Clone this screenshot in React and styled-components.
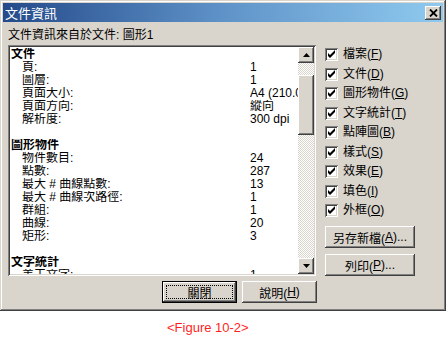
import styled, { createGlobalStyle } from "styled-components";

const FACE = "#d9d4cc";

const GlobalStyle = createGlobalStyle`
  body {
    margin: 0;
    background: #fff;
    font-family: "Liberation Sans", "Noto Sans CJK TC", sans-serif;
    font-size: 12px;
    color: #000;
  }
`;

const raised = `
  box-shadow: inset -1px -1px #404040, inset 1px 1px #fff,
    inset -2px -2px #808080, inset 2px 2px ${FACE};
`;

const sunken = `
  box-shadow: inset 1px 1px #808080, inset -1px -1px #fff,
    inset 2px 2px #404040, inset -2px -2px ${FACE};
`;

const Window = styled.div`
  width: 446px;
  height: 311px;
  box-sizing: border-box;
  padding: 3px 3px 0 3px;
  background: ${FACE};
  box-shadow: inset -1px -1px #404040, inset 1px 1px ${FACE},
    inset -2px -2px #808080, inset 2px 2px #fff;
  display: flex;
  flex-direction: column;
`;

const TitleBar = styled.div`
  height: 19px;
  display: flex;
  align-items: center;
  justify-content: space-between;
  padding: 0 2px;
  background: linear-gradient(to right, #244a8a, #5f93c8 50%, #8fcaef);
  color: #fff;
  font-family: "Noto Sans CJK TC", sans-serif;
  font-size: 13px;
  line-height: 19px;
`;

const CloseButton = styled.div`
  width: 16px;
  height: 14px;
  display: flex;
  align-items: center;
  justify-content: center;
  background: ${FACE};
  ${raised}
`;

const Body = styled.div`
  padding: 6px 0 0 5px;
  display: flex;
  flex-direction: column;
`;

const SourceLabel = styled.div`
  height: 14px;
  line-height: 14px;
  margin-bottom: 3px;
`;

const Main = styled.div`
  display: flex;
  gap: 9px;
`;

const ListBox = styled.div`
  width: 308px;
  height: 231px;
  box-sizing: border-box;
  padding: 2px;
  background: #fff;
  display: flex;
  ${sunken}
`;

const ListContent = styled.div`
  flex: 1;
  overflow: hidden;
  padding-top: 1px;
`;

const Row = styled.div`
  display: grid;
  grid-template-columns: 240px 1fr;
  height: 13px;
  line-height: 13px;
  white-space: nowrap;
  overflow: hidden;
  padding-left: ${(p) => (p.$heading ? 1 : 0)}px;
  font-weight: ${(p) => (p.$heading ? 700 : 400)};
`;

const RowLabel = styled.span`
  padding-left: ${(p) => (p.$heading ? 0 : 12)}px;
`;

const RowValue = styled.span`
  overflow: hidden;
`;

const ScrollBar = styled.div`
  width: 16px;
  display: flex;
  flex-direction: column;
`;

const ArrowButton = styled.div`
  width: 16px;
  height: 16px;
  display: flex;
  align-items: center;
  justify-content: center;
  background: ${FACE};
  ${raised}
`;

const Track = styled.div`
  flex: 1;
  background-color: #fff;
  background-image: conic-gradient(${FACE} 25%, #fff 0 50%, ${FACE} 0 75%, #fff 0);
  background-size: 2px 2px;
`;

const Thumb = styled.div`
  margin-top: 12px;
  height: 60px;
  background: ${FACE};
  ${raised}
`;

const SidePanel = styled.div`
  display: flex;
  flex-direction: column;
  padding-top: 3px;
`;

const CheckRow = styled.div`
  height: 19.5px;
  display: flex;
  align-items: flex-start;
  gap: 5px;
  line-height: 13px;
`;

const Box = styled.div`
  width: 13px;
  height: 13px;
  background: #fff;
  ${sunken}
`;

const Key = styled.span`
  text-decoration: underline;
`;

const SideButton = styled.div`
  width: 90px;
  height: 22px;
  margin-top: ${(p) => p.$top}px;
  display: flex;
  align-items: center;
  justify-content: center;
  background: ${FACE};
  ${raised}
`;

const Footer = styled.div`
  width: 309px;
  margin-top: 5px;
  display: flex;
  justify-content: flex-end;
  gap: 5px;
`;

const Button = styled.div`
  width: 75px;
  height: 22px;
  box-sizing: border-box;
  display: flex;
  align-items: center;
  justify-content: center;
  background: ${FACE};
  ${raised}
  border: ${(p) => (p.$default ? "1px solid #000" : "none")};
  outline: ${(p) => (p.$default ? "1px dotted #000" : "none")};
  outline-offset: -5px;
`;

const Caption = styled.div`
  padding: 9px 0 0 167px;
  font-family: "Liberation Sans", Arial, sans-serif;
  font-size: 13px;
  line-height: 16px;
  color: #ff1f1f;
`;

const CloseIcon = () => (
  <svg width="9" height="8" viewBox="0 0 9 8">
    <path d="M1 0.5 L8 7.5 M8 0.5 L1 7.5" stroke="#000" strokeWidth="1.8" />
  </svg>
);

const Arrow = ({ down }) => (
  <svg width="7" height="4" viewBox="0 0 7 4">
    <path d={down ? "M0 0 H7 L3.5 4Z" : "M0 4 H7 L3.5 0Z"} fill="#000" />
  </svg>
);

const Check = () => (
  <Box>
    <svg width="13" height="13" viewBox="0 0 13 13">
      <polygon points="3,5 3,8 5,10 10,5 10,2 5,7" fill="#000" />
    </svg>
  </Box>
);

const rows = [
  { label: "文件", heading: true },
  { label: "頁:", value: "1" },
  { label: "圖層:", value: "1" },
  { label: "頁面大小:", value: "A4 (210.0 x 297.0 mm)" },
  { label: "頁面方向:", value: "縱向" },
  { label: "解析度:", value: "300 dpi" },
  { label: "" },
  { label: "圖形物件", heading: true },
  { label: "物件數目:", value: "24" },
  { label: "點數:", value: "287" },
  { label: "最大 # 曲線點數:", value: "13" },
  { label: "最大 # 曲線次路徑:", value: "1" },
  { label: "群組:", value: "1" },
  { label: "曲線:", value: "20" },
  { label: "矩形:", value: "3" },
  { label: "" },
  { label: "文字統計", heading: true },
  { label: "美工文字:", value: "1" },
];

const checks = [
  ["檔案", "F"],
  ["文件", "D"],
  ["圖形物件", "G"],
  ["文字統計", "T"],
  ["點陣圖", "B"],
  ["樣式", "S"],
  ["效果", "E"],
  ["填色", "I"],
  ["外框", "O"],
];

const App = () => {
  return (
    <>
      <GlobalStyle />
      <Window>
        <TitleBar>
          <span>文件資訊</span>
          <CloseButton>
            <CloseIcon />
          </CloseButton>
        </TitleBar>
        <Body>
          <SourceLabel>文件資訊來自於文件: 圖形1</SourceLabel>
          <Main>
            <ListBox>
              <ListContent>
                {rows.map((r, i) => (
                  <Row key={i} $heading={r.heading}>
                    <RowLabel $heading={r.heading}>{r.label || "\u00a0"}</RowLabel>
                    <RowValue>{r.value}</RowValue>
                  </Row>
                ))}
              </ListContent>
              <ScrollBar>
                <ArrowButton>
                  <Arrow />
                </ArrowButton>
                <Track>
                  <Thumb />
                </Track>
                <ArrowButton>
                  <Arrow down />
                </ArrowButton>
              </ScrollBar>
            </ListBox>
            <SidePanel>
              {checks.map(([text, key]) => (
                <CheckRow key={key}>
                  <Check />
                  <span>
                    {text}(<Key>{key}</Key>)
                  </span>
                </CheckRow>
              ))}
              <SideButton $top={2.5}>
                另存新檔(<Key>A</Key>)...
              </SideButton>
              <SideButton $top={6}>
                列印(<Key>P</Key>)...
              </SideButton>
            </SidePanel>
          </Main>
          <Footer>
            <Button $default>關閉</Button>
            <Button>
              說明(<Key>H</Key>)
            </Button>
          </Footer>
        </Body>
      </Window>
      <Caption>&lt;Figure 10-2&gt;</Caption>
    </>
  );
};

export default App;
